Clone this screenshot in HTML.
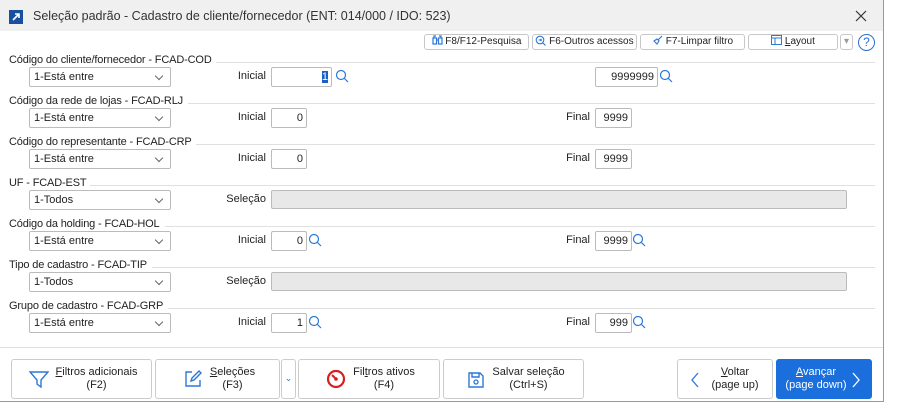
<!DOCTYPE html><html><head><style>
*{box-sizing:border-box;margin:0;padding:0}
body{width:898px;height:409px;background:#fff;font-family:"Liberation Sans",sans-serif;font-size:11px;color:#222;position:relative;overflow:hidden}
.win{position:absolute;left:0;top:0;width:884px;height:402px;border-right:1px solid #999;border-bottom:1px solid #999;background:#fff}
.title{position:absolute;left:0;top:0;width:883px;height:31px;background:#f0f0f0}
.a{position:absolute}
.tb{position:absolute;top:34px;height:16px;border:1px solid #c8c8c8;border-radius:3px;background:#fff;font-size:10px;text-align:center;line-height:14px}
.lbl{position:absolute;left:9px;font-size:11px;letter-spacing:-0.15px}
.sep{position:absolute;left:9px;right:8px;height:1px;background:#e0e0e0}
.dd{position:absolute;left:29px;width:142px;height:20px;border:1px solid #bbb;border-radius:2px;padding-left:4px;line-height:18px}
.dd:after{content:"";position:absolute;right:8px;top:5px;width:5px;height:5px;border-right:1px solid #666;border-bottom:1px solid #666;transform:rotate(45deg)}
.in{position:absolute;height:20px;border:1px solid #bbb;border-radius:2px;text-align:right;padding-right:3px;line-height:18px}
.r{position:absolute;text-align:right}
.btn{position:absolute;top:359px;height:40px;border:1px solid #ccc;border-radius:3px;background:#fff;text-align:center;line-height:13px;padding-top:6px;font-size:11px}
</style></head><body>
<div class="win">
<div class="title"></div>
<div class="a" style="left:9px;top:10px;width:14px;height:14px;background:#1a4fa0"><svg width="14" height="14"><path d="M4 10L10 4M6 4H10V8" stroke="#fff" stroke-width="1.6" fill="none"/></svg></div>
<div class="a" style="left:33px;top:9px;font-size:12.5px;color:#333">Seleção padrão - Cadastro de cliente/fornecedor (ENT: 014/000 / IDO: 523)</div>
<svg class="a" style="left:855px;top:10px" width="12" height="12"><path d="M1 1L11 11M11 1L1 11" stroke="#333" stroke-width="1.2"/></svg>

<div class="tb" style="left:424px;width:105px"><svg width="11" height="10" style="vertical-align:-1px"><g stroke="#2a78d8" fill="none" stroke-width="1.2"><rect x="1" y="3" width="3.5" height="6"/><rect x="6.5" y="3" width="3.5" height="6"/><path d="M2 3V1H4M9 3V1H7M4.5 5H6.5"/></g></svg> F8/F12-Pesquisa</div>
<div class="tb" style="left:532px;width:105px"><svg width="11" height="11" style="vertical-align:-2px"><circle cx="5" cy="5" r="3.8" stroke="#2a78d8" fill="none" stroke-width="1.1"/><path d="M8 8L10.5 10.5M3.5 5H6.5M5.5 4L6.5 5L5.5 6" stroke="#2a78d8" fill="none" stroke-width="1.1"/></svg> F6-Outros acessos</div>
<div class="tb" style="left:640px;width:105px"><svg width="11" height="11" style="vertical-align:-2px"><path d="M10 1L6 5M2 6L5 4L7 6L5 9Z" stroke="#2a78d8" fill="none" stroke-width="1.1"/></svg> F7-Limpar filtro</div>
<div class="tb" style="left:748px;width:90px"><svg width="11" height="10" style="vertical-align:-1px"><path d="M0.5 0.5H10.5V9.5H0.5ZM0.5 3H10.5M4 3V9.5" stroke="#2a78d8" fill="none"/></svg> <u>L</u>ayout</div>
<div class="tb" style="left:840px;width:13px;color:#999">▾</div>
<div class="a" style="left:858px;top:34px;width:17px;height:17px;border:1.5px solid #2a6fd0;border-radius:50%;color:#2a6fd0;text-align:center;font-size:12px;line-height:14px">?</div>

<div class="lbl" style="top:54px">Código do cliente/fornecedor - FCAD-COD</div><div class="sep" style="top:62px;left:216px"></div>
<div class="dd" style="top:67px">1-Está entre</div>
<div class="r" style="left:200px;width:66px;top:70px">Inicial</div>
<div class="in" style="left:271px;top:67px;width:61px"><span style="background:#1a5fc8;color:#fff">1</span></div>
<div class="in" style="left:595px;top:67px;width:63px">9999999</div>

<div class="lbl" style="top:95px">Código da rede de lojas - FCAD-RLJ</div><div class="sep" style="top:103px;left:188px"></div>
<div class="dd" style="top:108px">1-Está entre</div>
<div class="r" style="left:200px;width:66px;top:111px">Inicial</div>
<div class="in" style="left:271px;top:108px;width:36px">0</div>
<div class="r" style="left:540px;width:50px;top:111px">Final</div>
<div class="in" style="left:595px;top:108px;width:37px">9999</div>

<div class="lbl" style="top:136px">Código do representante - FCAD-CRP</div><div class="sep" style="top:144px;left:196px"></div>
<div class="dd" style="top:149px">1-Está entre</div>
<div class="r" style="left:200px;width:66px;top:152px">Inicial</div>
<div class="in" style="left:271px;top:149px;width:36px">0</div>
<div class="r" style="left:540px;width:50px;top:152px">Final</div>
<div class="in" style="left:595px;top:149px;width:37px">9999</div>

<div class="lbl" style="top:177px">UF - FCAD-EST</div><div class="sep" style="top:185px;left:90px"></div>
<div class="dd" style="top:190px">1-Todos</div>
<div class="r" style="left:200px;width:66px;top:193px">Seleção</div>
<div class="in" style="left:271px;top:190px;width:576px;height:19px;background:#e8e8e8"></div>

<div class="lbl" style="top:218px">Código da holding - FCAD-HOL</div><div class="sep" style="top:226px;left:165px"></div>
<div class="dd" style="top:231px">1-Está entre</div>
<div class="r" style="left:200px;width:66px;top:234px">Inicial</div>
<div class="in" style="left:271px;top:231px;width:36px">0</div>
<div class="r" style="left:540px;width:50px;top:234px">Final</div>
<div class="in" style="left:595px;top:231px;width:37px">9999</div>

<div class="lbl" style="top:259px">Tipo de cadastro - FCAD-TIP</div><div class="sep" style="top:267px;left:152px"></div>
<div class="dd" style="top:272px">1-Todos</div>
<div class="r" style="left:200px;width:66px;top:275px">Seleção</div>
<div class="in" style="left:271px;top:272px;width:576px;height:19px;background:#e8e8e8"></div>

<div class="lbl" style="top:300px">Grupo de cadastro - FCAD-GRP</div><div class="sep" style="top:308px;left:168px"></div>
<div class="dd" style="top:313px">1-Está entre</div>
<div class="r" style="left:200px;width:66px;top:316px">Inicial</div>
<div class="in" style="left:271px;top:313px;width:36px">1</div>
<div class="r" style="left:540px;width:50px;top:316px">Final</div>
<div class="in" style="left:595px;top:313px;width:37px">999</div>

<svg class="a" style="left:0;top:0" width="884" height="340" fill="none" stroke="#2a78d8" stroke-width="1.2">
<g><circle cx="341" cy="75" r="4.5"/><path d="M344.5 78.5L348 82"/></g>
<g><circle cx="665" cy="75" r="4.5"/><path d="M668.5 78.5L672 82"/></g>
<g><circle cx="314" cy="239" r="4.5"/><path d="M317.5 242.5L321 246"/></g>
<g><circle cx="638" cy="239" r="4.5"/><path d="M641.5 242.5L645 246"/></g>
<g><circle cx="314" cy="321" r="4.5"/><path d="M317.5 324.5L321 328"/></g>
<g><circle cx="638" cy="321" r="4.5"/><path d="M641.5 324.5L645 328"/></g>
</svg>

<div class="sep" style="top:347px;left:0;right:0"></div>

<div class="btn" style="left:11px;width:141px;padding-left:30px"><u>F</u>iltros adicionais<br>(F2)</div>
<svg class="a" style="left:29px;top:370px" width="20" height="18"><path d="M1 2H19L12 10V17L8 14V10Z" stroke="#2a78d8" stroke-width="1.4" fill="none"/></svg>
<div class="btn" style="left:155px;width:125px;padding-left:30px"><u>S</u>eleções<br>(F3)</div>
<svg class="a" style="left:183px;top:369px" width="20" height="20"><path d="M9 3H3V17H17V11M8 12L9 9L16 2L18 4L11 11Z" stroke="#2a78d8" stroke-width="1.4" fill="none"/></svg>
<div class="btn" style="left:281px;width:15px;color:#2a78d8;font-size:9px;padding-top:12px">⌄</div>
<div class="btn" style="left:298px;width:142px;padding-left:30px">Fil<u>t</u>ros ativos<br>(F4)</div>
<svg class="a" style="left:326px;top:369px" width="20" height="20"><circle cx="10" cy="10" r="8" stroke="#d42020" stroke-width="2.2" fill="none"/><path d="M10 10L6 6" stroke="#d42020" stroke-width="2"/><circle cx="10" cy="10" r="1.8" fill="#d42020"/></svg>
<div class="btn" style="left:443px;width:141px;padding-left:30px">Salvar seleção<br>(Ctrl+S)</div>
<svg class="a" style="left:467px;top:371px" width="18" height="18"><path d="M2 2H13L16 5V16H2Z M5 2V6H12V2" stroke="#2a78d8" stroke-width="1.4" fill="none"/><circle cx="9" cy="11" r="2" stroke="#2a78d8" stroke-width="1.3" fill="none"/></svg>
<div class="btn" style="left:677px;width:96px;padding-left:20px"><u>V</u>oltar<br>(page up)</div>
<svg class="a" style="left:690px;top:372px" width="10" height="16"><path d="M8 1L2 8L8 15" stroke="#2a78d8" stroke-width="1.3" fill="none"/></svg>
<div class="btn" style="left:776px;width:96px;background:#1a6fdc;border-color:#1a6fdc;color:#fff;padding-right:16px"><u>A</u>vançar<br>(page down)</div>
<svg class="a" style="left:851px;top:372px" width="10" height="16"><path d="M2 1L8 8L2 15" stroke="#fff" stroke-width="1.3" fill="none"/></svg>
</div>
</body></html>
